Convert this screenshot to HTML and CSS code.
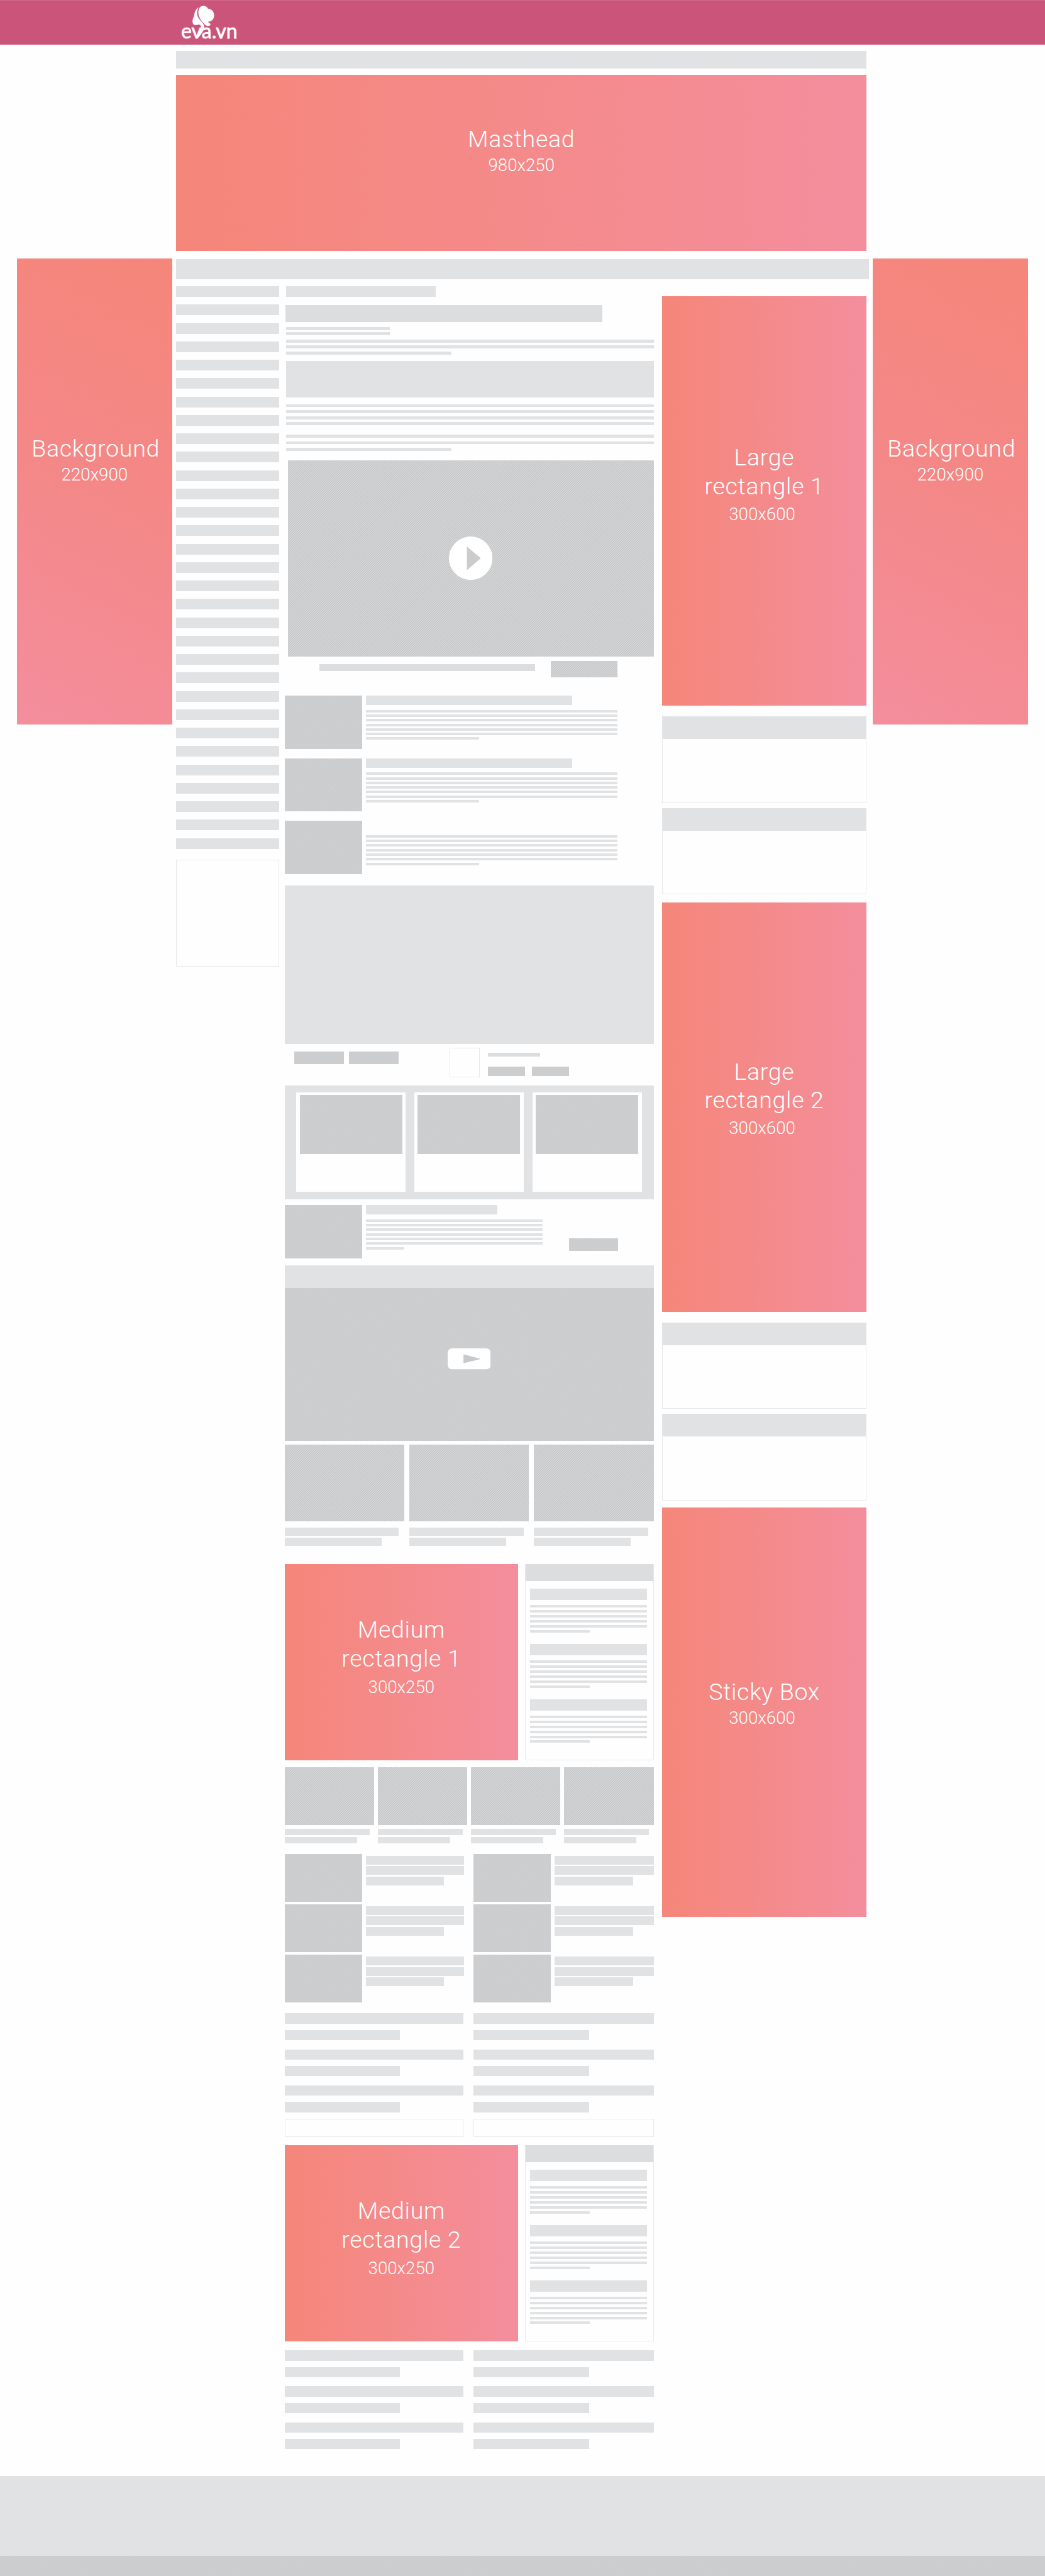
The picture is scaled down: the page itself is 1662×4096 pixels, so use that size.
FILE: index.html
```html
<!DOCTYPE html>
<html lang="vi">
<head>
<meta charset="utf-8">
<title>eva.vn</title>
<link rel="stylesheet" href="styles.css">
</head>
<body>
<header class="header">
  <svg class="logo" viewBox="0 0 110 66" role="img" aria-label="eva.vn">
    <path d="M32.7 3.2C26 6 24.500 14 23.500 20C21 25 19.500 31 23.400 35C26.500 37 31 34 35 35.500C38.500 38 37 46 29 59L32.500 58C38.500 50 43 44 42.500 38C41 30 31 26 29.500 16C29 10 30.500 6 32.700 3.200Z"/>
    <path d="M33.500 5C36 -1 46 -1.500 49.500 5.500C56 6 60.700 11 60.700 17.500C60.700 25 56 29 49.500 29.500C50.500 32 54.500 32 54 35C52.500 38.500 46 38.500 42 33C37 27 31.500 21 31.700 12C31.700 9 32.500 7 33.500 5Z"/>
    <text x="0" y="60" textLength="103.500" lengthAdjust="spacingAndGlyphs">eva.vn</text>
  </svg>
</header>
<div class="topbar"></div>
<section class="ad masthead"><h2>Masthead</h2><p>980x250</p></section>

<div class="layout">
  <aside class="ad skyscraper"><h2>Background</h2><p>220x900</p></aside>

  <main class="content">
    <div class="subnav"></div>
    <div class="columns">
      <nav class="side">
        <div class="menu">
          <i></i><i></i><i></i><i></i><i></i><i></i><i></i><i></i><i></i><i></i><i></i>
          <i></i><i></i><i></i><i></i><i></i><i></i><i></i><i></i><i></i><i></i>
          <i></i><i></i><i></i><i></i><i></i><i></i><i></i><i></i><i></i><i></i>
        </div>
        <div class="side-box"></div>
      </nav>

      <div class="center">
        <div class="kicker"></div>
        <div class="headline"></div>
        <div class="lines meta"><i></i><i></i></div>
        <div class="lines para lead"><i></i><i></i><i class="short"></i></div>
        <div class="quote"></div>
        <div class="lines para body-a"><i></i><i></i><i></i><i></i></div>
        <div class="lines para body-b"><i></i><i></i><i class="short"></i></div>
        <div class="video hatch">
          <svg class="play" viewBox="0 0 80 80"><circle cx="40" cy="40" r="40" fill="#fff"/><path d="M33 18.5L58.5 40L33 62Z" fill="#cbccce"/></svg>
        </div>
        <div class="caption"><div class="caption-line"></div><div class="caption-button hatch"></div></div>

        <div class="articles">
          <article class="article"><div class="thumb hatch soft"></div><div class="text"><div class="title"></div><div class="lines"><i></i><i></i><i></i><i></i><i></i><i></i><i class="short"></i></div></div></article>
          <article class="article"><div class="thumb hatch soft"></div><div class="text"><div class="title"></div><div class="lines"><i></i><i></i><i></i><i></i><i></i><i></i><i class="short"></i></div></div></article>
          <article class="article"><div class="thumb hatch soft"></div><div class="text"><div class="title blank"></div><div class="lines"><i></i><i></i><i></i><i></i><i></i><i></i><i class="short"></i></div></div></article>
        </div>

        <div class="comments"></div>
        <div class="actions">
          <div class="button hatch soft"></div>
          <div class="button hatch soft"></div>
          <div class="avatar"></div>
          <div class="share">
            <div class="share-line"></div>
            <div class="share-buttons"><i class="hatch soft"></i><i class="hatch soft"></i></div>
          </div>
        </div>

        <div class="panel">
          <div class="card"><div class="hatch soft"></div></div>
          <div class="card"><div class="hatch soft"></div></div>
          <div class="card"><div class="hatch soft"></div></div>
        </div>

        <article class="article promo"><div class="thumb hatch soft"></div><div class="text"><div class="title"></div><div class="lines"><i></i><i></i><i></i><i></i><i></i><i></i><i class="short"></i></div></div><div class="button hatch soft"></div></article>

        <div class="player">
          <div class="player-bar"></div>
          <div class="player-screen hatch soft">
            <svg class="tube" viewBox="0 0 79 38.5"><rect width="79" height="38.5" rx="8" fill="#fff"/><path d="M29 11L61 19.3L29 27.5Z" fill="#c8c9cb"/></svg>
          </div>
        </div>

        <div class="trio">
          <div class="tile"><div class="pic hatch"></div><i></i><i></i></div>
          <div class="tile"><div class="pic hatch"></div><i></i><i></i></div>
          <div class="tile"><div class="pic hatch"></div><i></i><i></i></div>
        </div>

        <div class="feature feature-a">
          <section class="ad medium"><h2>Medium<br>rectangle 1</h2><p>300x250</p></section>
          <div class="digest">
            <div class="digest-head"></div>
            <div class="entry"><b></b><div class="lines"><i></i><i></i><i></i><i></i><i></i><i class="short"></i></div></div>
            <div class="entry"><b></b><div class="lines"><i></i><i></i><i></i><i></i><i></i><i class="short"></i></div></div>
            <div class="entry"><b></b><div class="lines"><i></i><i></i><i></i><i></i><i></i><i class="short"></i></div></div>
          </div>
        </div>

        <div class="quad">
          <div class="tile"><div class="pic hatch"></div><i></i><i></i></div>
          <div class="tile"><div class="pic hatch"></div><i></i><i></i></div>
          <div class="tile"><div class="pic hatch"></div><i></i><i></i></div>
          <div class="tile"><div class="pic hatch"></div><i></i><i></i></div>
        </div>

        <div class="duo">
          <div class="teaser"><div class="hatch soft"></div><p><i></i><i></i><i></i></p></div>
          <div class="teaser"><div class="hatch soft"></div><p><i></i><i></i><i></i></p></div>
          <div class="teaser"><div class="hatch soft"></div><p><i></i><i></i><i></i></p></div>
          <div class="teaser"><div class="hatch soft"></div><p><i></i><i></i><i></i></p></div>
          <div class="teaser"><div class="hatch soft"></div><p><i></i><i></i><i></i></p></div>
          <div class="teaser"><div class="hatch soft"></div><p><i></i><i></i><i></i></p></div>
        </div>

        <div class="bars bars-a">
          <div><i></i><i></i></div><div><i></i><i></i></div>
          <div><i></i><i></i></div><div><i></i><i></i></div>
          <div><i></i><i></i></div><div><i></i><i></i></div>
        </div>
        <div class="boxes"><i></i><i></i></div>

        <div class="feature feature-b">
          <section class="ad medium"><h2>Medium<br>rectangle 2</h2><p>300x250</p></section>
          <div class="digest">
            <div class="digest-head"></div>
            <div class="entry"><b></b><div class="lines"><i></i><i></i><i></i><i></i><i></i><i class="short"></i></div></div>
            <div class="entry"><b></b><div class="lines"><i></i><i></i><i></i><i></i><i></i><i class="short"></i></div></div>
            <div class="entry"><b></b><div class="lines"><i></i><i></i><i></i><i></i><i></i><i class="short"></i></div></div>
          </div>
        </div>

        <div class="bars bars-b">
          <div><i></i><i></i></div><div><i></i><i></i></div>
          <div><i></i><i></i></div><div><i></i><i></i></div>
          <div><i></i><i></i></div><div><i></i><i></i></div>
        </div>
      </div>

      <aside class="right">
        <section class="ad large large-1"><h2>Large<br>rectangle 1</h2><p>300x600</p></section>
        <div class="widgets"><div class="widget"></div><div class="widget"></div></div>
        <section class="ad large large-2"><h2>Large<br>rectangle 2</h2><p>300x600</p></section>
        <div class="widgets"><div class="widget"></div><div class="widget"></div></div>
        <section class="ad large sticky-box"><h2>Sticky Box</h2><p>300x600</p></section>
      </aside>
    </div>
  </main>

  <aside class="ad skyscraper"><h2>Background</h2><p>220x900</p></aside>
</div>

<footer class="footer"><div class="footer-strip hatch soft"></div></footer>
</body>
</html>
```
FILE: styles.css
```css
/* 1rem is ten design pixels of the 1920px wide layout */
html { font-size: 8.65625px; }
* { box-sizing: border-box; }
body {
  margin: 0;
  width: 192rem;
  background: #fefefe;
  font-family: Roboto, "Liberation Sans", sans-serif;
  overflow-x: hidden;
}
h2, p { margin: 0; font-weight: 300; }
i, b { display: block; }

:root { --grey: #e1e2e4; --grey-2: #dcdddf; --edge: #e9e9ea; }

.hatch { background: repeating-linear-gradient(135deg, #c1c2c4 0, #dadbdd .15rem, #c1c2c4 .3rem); }
.hatch.soft { background: repeating-linear-gradient(45deg, #c8c9cb 0, #d1d2d4 .15rem, #c8c9cb .3rem); }

/* header */
.header { height: 8.2rem; padding: .9rem 0 0 33.3rem; background: #cb547a; border-top: 1px solid #d4698b; }
.logo { display: block; width: 11rem; height: 6.6rem; fill: #fff; overflow: visible; }
.logo text { font: 400 38px Lato, "Open Sans", sans-serif; stroke: #fff; stroke-width: .9; stroke-linejoin: round; }
.topbar { width: 126.8rem; height: 3.2rem; margin: 1.2rem 0 0 32.4rem; background: var(--grey); }

/* advertising slots */
.ad { flex: none; color: #fff; text-align: center; background: linear-gradient(90deg, #f5867a, #f48a8a 50%, #f48e9d); }
.ad h2 { font-size: 4.35rem; line-height: 5.3rem; letter-spacing: .075rem; }
.ad p { font-size: 3.2rem; line-height: 4.3rem; margin-top: -.1rem; }
.masthead { width: 126.8rem; height: 32.4rem; margin: 1.1rem 0 0 32.4rem; padding-top: 9.35rem; }
.skyscraper { width: 28.55rem; height: 85.7rem; padding-top: 32.45rem; background: linear-gradient(208deg, #f5867a, #f48888 50%, #f48e9d); }
.skyscraper h2 { padding-left: .4rem; }
.large { height: 75.2rem; }
.large p { margin-top: .23rem; padding-right: .8rem; }
.large-1 { padding-top: 27.05rem; }
.large-2 { padding-top: 28.5rem; }
.sticky-box { padding-top: 31.2rem; }
.sticky-box p { margin-top: -.1rem; }
.medium { width: 42.9rem; height: 36.1rem; padding-top: 9.5rem; }
.medium p { margin-top: .44rem; }

/* page frame */
.layout { display: flex; align-items: flex-start; gap: .75rem; height: 407.37rem; margin-top: 1.33rem; padding-left: 3.1rem; }
.content { flex: none; width: 127.2rem; padding-top: .17rem; }
.subnav { height: 3.66rem; background: var(--grey); }
.columns { display: flex; align-items: flex-start; margin-top: 1.34rem; }

/* left menu */
.side { width: 18.9rem; flex: none; }
.menu { display: flex; flex-direction: column; justify-content: space-between; height: 103.36rem; }
.menu i { height: 1.96rem; background: var(--grey); }
.side-box { height: 19.64rem; margin: 1.96rem 0 0 -.1rem; border: 1px solid var(--edge); }

/* right column */
.right { width: 37.65rem; flex: none; margin: 1.83rem 0 0 1.5rem; }
.widgets { display: flex; flex-direction: column; justify-content: space-between; height: 32.7rem; margin: 2rem 0 1.45rem; }
.widget { height: 15.86rem; border: 1px solid var(--edge); border-top: 4.2rem solid var(--grey); }
.large-2 + .widgets { margin: 1.95rem 0 1.35rem; }

/* article column */
.center { width: 67.8rem; flex: none; margin-left: 1rem; }
.lines { display: flex; flex-direction: column; justify-content: space-between; }
.lines i { height: .46rem; background: var(--grey); }
.kicker { width: 27.5rem; height: 1.96rem; margin-left: .3rem; background: var(--grey); }
.headline { width: 58.2rem; height: 3.14rem; margin: 1.44rem 0 0 .2rem; background: var(--grey-2); }
.meta { width: 19rem; height: 1.53rem; margin: .93rem 0 0 .3rem; }
.meta i, .para i { height: .57rem; }
.para { margin-left: .3rem; }
.para .short { width: 30.35rem; }
.lead { height: 2.85rem; margin-top: .75rem; }
.quote { height: 6.75rem; margin: 1.1rem 0 0 .3rem; background: var(--grey); }
.body-a { height: 3.9rem; margin-top: 1.2rem; }
.body-b { height: 2.9rem; margin-top: 1.75rem; }
.video { display: flex; align-items: center; justify-content: center; height: 36rem; margin: 1.8rem 0 0 .6rem; }
.play { width: 8rem; height: 8rem; }
.caption { display: flex; height: 3.1rem; margin-top: .8rem; }
.caption-line { width: 39.6rem; height: 1.23rem; margin: .64rem 0 0 6.4rem; background: var(--grey-2); }
.caption-button { width: 12.3rem; margin-left: 2.9rem; }

.articles { display: grid; gap: 1.7rem; margin-top: 3.3rem; }
.article { display: flex; height: 9.8rem; }
.thumb { width: 14.2rem; flex: none; }
.text { width: 46.3rem; margin-left: .7rem; }
.title { width: 37.9rem; height: 1.76rem; background: var(--grey); }
.title.blank { background: none; }
.article .lines { height: 5.5rem; margin-top: .88rem; }
.article .short { width: 20.8rem; }

.comments { height: 29.16rem; margin-top: 2.04rem; background: var(--grey); }
.actions { display: flex; align-items: flex-start; height: 5.45rem; margin-top: .7rem; padding-left: 1.74rem; }
.button { width: 9.1rem; height: 2.3rem; flex: none; }
.actions .button { margin: .7rem 1.03rem 0 0; }
.avatar { width: 5.55rem; height: 5.45rem; margin-left: 8.3rem; border: 1px solid var(--edge); }
.share { margin-left: 1.45rem; padding-top: .9rem; }
.share-line { width: 9.6rem; height: .67rem; background: var(--grey-2); }
.share-buttons { display: flex; gap: 1.2rem; margin-top: 1.93rem; }
.share-buttons i { width: 6.9rem; height: 1.7rem; }

.panel { display: flex; gap: 1.6rem; height: 20.95rem; margin-top: 1.45rem; padding: 1.3rem 2.16rem 1.4rem; background: var(--grey); }
.card { width: 20.1rem; padding: .45rem .65rem 0 .6rem; background: #fefefe; }
.card div { height: 10.85rem; }

.promo { height: 9.9rem; margin-top: 1rem; }
.promo .text { width: 32.5rem; }
.promo .title { width: 24.2rem; height: 1.8rem; }
.promo .short { width: 7.1rem; }
.promo .button { margin: 6.15rem 0 0 4.8rem; }

.player { margin-top: 1.25rem; }
.player-bar { height: 4.1rem; background: var(--grey); }
.player-screen { display: flex; justify-content: center; height: 28.1rem; padding-top: 11.15rem; }
.tube { width: 7.9rem; height: 3.85rem; }

.trio, .quad { display: flex; justify-content: space-between; }
.tile i { background: var(--grey); }
.trio { margin-top: .73rem; }
.trio .tile { width: 22rem; }
.trio .pic { height: 14.1rem; margin-bottom: 1.07rem; }
.trio i { width: 21rem; height: 1.53rem; }
.trio i + i { width: 17.8rem; margin-top: .39rem; }
.quad { margin-top: 1.3rem; }
.quad .tile { width: 16.47rem; }
.quad .pic { height: 10.55rem; margin-bottom: .78rem; }
.quad i { width: 15.65rem; height: 1.17rem; }
.quad i + i { width: 13.3rem; height: 1.1rem; margin-top: .3rem; }

.feature { display: flex; justify-content: space-between; height: 36.1rem; }
.feature-a { margin-top: 3.25rem; }
.feature-b { margin-top: 1.5rem; }
.digest { width: 23.65rem; border: 1px solid var(--edge); border-top: 0; }
.digest-head { height: 3.15rem; margin-bottom: 1.45rem; background: var(--grey-2); }
.entry { width: 21.55rem; height: 10.16rem; margin-left: .8rem; }
.entry b { height: 2rem; background: var(--grey); }
.entry .lines { height: 5.03rem; margin-top: .97rem; }
.entry .short { width: 11rem; }

.duo { display: grid; grid-template-columns: 33rem 33.05rem; column-gap: 1.75rem; row-gap: .52rem; margin-top: 2rem; }
.teaser { display: flex; gap: .7rem; height: 8.75rem; }
.teaser > div { width: 14.2rem; flex: none; }
.teaser p { flex: 1; padding-top: .3rem; }
.teaser i { height: 1.62rem; margin-bottom: .31rem; background: var(--grey); }
.teaser i:last-child { width: 14.35rem; }

.bars { display: grid; grid-template-columns: 32.8rem 33.05rem; column-gap: 1.95rem; row-gap: 1.64rem; }
.bars i { height: 1.93rem; background: var(--grey); }
.bars i + i { width: 21.15rem; margin-top: 1.1rem; }
.bars-a { margin-top: 2rem; }
.bars-b { margin-top: 1.65rem; }
.boxes { display: grid; grid-template-columns: 32.8rem 33.05rem; column-gap: 1.95rem; height: 3.27rem; margin-top: 1.24rem; }
.boxes i { border: 1px solid var(--edge); }

.footer { height: 18.5rem; padding-top: 14.7rem; background: var(--grey); }
.footer-strip { height: 3.8rem; }
```
